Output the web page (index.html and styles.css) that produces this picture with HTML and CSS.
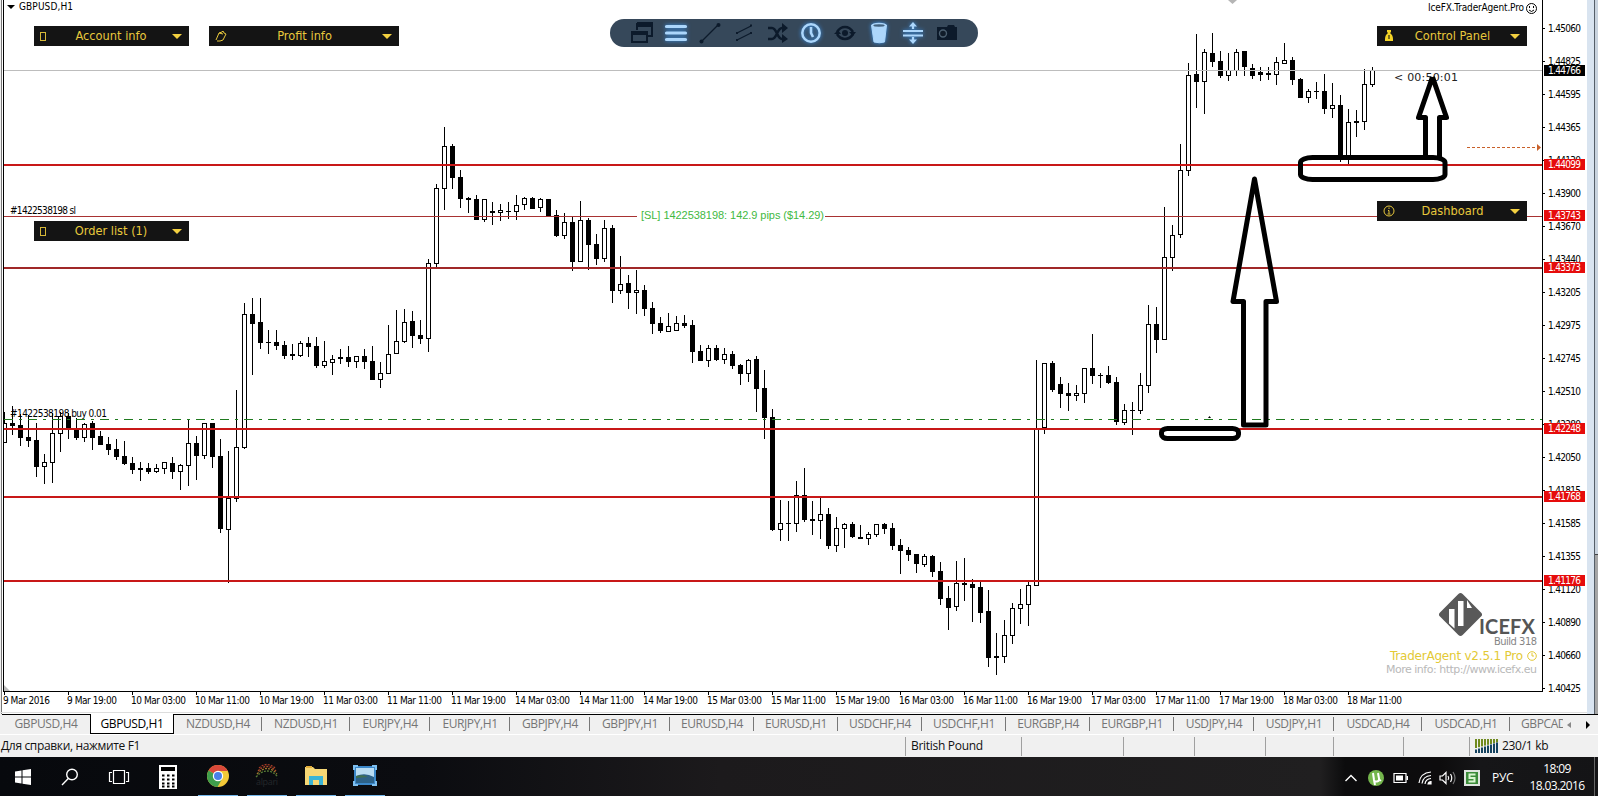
FILE: index.html
```html
<!DOCTYPE html>
<html lang="ru">
<head>
    <meta charset="UTF-8">
    <title>GBPUSD,H1</title>
    <link rel="stylesheet" href="styles.css">
</head>
<body>
    <div class="chart-window">
        <svg class="chart" id="chart" width="1587" height="712">
            <g id="candles" shape-rendering="crispEdges"></g>
            <g id="levels" shape-rendering="crispEdges"></g>
            <g id="axes" shape-rendering="crispEdges"></g>
            <g id="labels"></g>

            <!-- chart title -->
            <path d="M7 5h8l-4 4z"/>
            <text x="19" y="10" textLength="54">GBPUSD,H1</text>
            <path d="M1228 0h9l-4.500 4z" fill="#b5b5b5"/>
            <text x="1428" y="11" textLength="96">IceFX.TraderAgent.Pro</text>
            <g fill="none" stroke="#000">
                <circle cx="1531.500" cy="8.500" r="5"/>
                <path d="M1529 10q2.500 3 5 0"/>
                <path d="M1529.500 6v2M1533.500 6v2"/>
            </g>
            <path d="M4 685l6 6h-6z" fill="#bbb"/>

            <text x="10" y="214" textLength="66">#1422538198 sl</text>
            <text x="10" y="417" textLength="97">#1422538198 buy 0.01</text>
            <rect x="637" y="214" width="188" height="5" fill="#fff"/>
            <text class="sl-text" x="641" y="219" textLength="183">[SL] 1422538198: 142.9 pips ($14.29)</text>
            <text class="timer" x="1394" y="81" textLength="64">&lt; 00:50:01</text>
            <path d="M1467 147.500h70" stroke="#c8602a" stroke-dasharray="3 2"/>
            <path d="M1537 144l4 3.500-4 3.500z" fill="#c8602a"/>
            <path d="M1208 418h3l-1.500-2z"/>

            <!-- hand drawn marks -->
            <g class="marks">
                <path d="M1254.500 179L1233 301.500h10.500v123.500h22.500v-123.500h10.500z"/>
                <path d="M1432.500 77L1418.500 117.500h7v40.500M1432.500 77L1446.500 117.500h-7v40.500"/>
                <rect x="1300.500" y="157.500" width="144.500" height="22" rx="12" ry="5"/>
                <rect x="1161.500" y="428.500" width="77" height="10" rx="6" ry="4"/>
            </g>

            <!-- watermark -->
            <g>
                <rect x="1444.500" y="598.500" width="32" height="32" rx="3" fill="#595959" transform="rotate(45 1460.500 614.500)"/>
                <path d="M1449 609h5.500v19.500l-5.500-5zM1458 601h5.500v25h-5.500zM1467 600l5 8h-5z" fill="#fff"/>
                <text class="logo-text" x="1479" y="634" textLength="56">ICEFX</text>
                <text class="build" x="1494" y="645" textLength="43">Build 318</text>
                <text class="agent" x="1390" y="660" textLength="133">TraderAgent v2.5.1 Pro</text>
                <circle cx="1532" cy="656" r="4.300" fill="none" stroke="#e3c935"/>
                <path d="M1532 653v3h2" fill="none" stroke="#e3c935"/>
                <text class="more" x="1386" y="673" textLength="151">More info: http://www.icefx.eu</text>
            </g>
        </svg>

        <div class="panel account"><span class="box"></span><b>Account info</b><i></i></div>
        <div class="panel profit">
            <svg width="12" height="12"><path d="M1 10L4 3l3-1 1-1 1 2 2 1-3 6-3 1H2M4 3l4 1" fill="none" stroke="#e8c83c"/></svg>
            <b>Profit info</b><i></i>
        </div>
        <div class="panel orders"><span class="box"></span><b>Order list (1)</b><i></i></div>
        <div class="panel control">
            <svg width="12" height="12"><path d="M4 0h4v2l-1 1q3 2 3 6v2H2V9q0-4 3-6L4 2z" fill="#f3d327"/><path d="M6 5v4M5 6h2M5 8h2" stroke="#554b12"/></svg>
            <b>Control Panel</b><i></i>
        </div>
        <div class="panel dashboard">
            <svg width="12" height="12"><circle cx="6" cy="6" r="5" fill="none" stroke="#e8c83c"/><path d="M6 2.500v1.500M5 5.500h1v3M4.500 9h3" fill="none" stroke="#e8c83c"/></svg>
            <b>Dashboard</b><i></i>
        </div>

        <div class="toolbar">
            <svg width="24" height="24"><path d="M7 2h15v13h-5M7 2v7" fill="none" stroke="#0c1a2b" stroke-width="2"/><path d="M6 2h17v4H6zM1 10h17v4H1z" fill="#0c1a2b"/><path d="M2 11h15v10H2z" fill="none" stroke="#0c1a2b" stroke-width="2"/></svg>
            <svg class="on" width="24" height="24"><path d="M2.500 5.500h19M2.500 12h19M2.500 18.500h19" stroke-width="3.200" stroke-linecap="round"/></svg>
            <svg width="24" height="24"><path d="M4 20L20 4" stroke="#0c1a2b" stroke-width="1.300"/><circle cx="3.500" cy="20.500" r="2" fill="#0c1a2b"/><circle cx="20.500" cy="4" r="2" fill="#0c1a2b"/></svg>
            <svg width="24" height="24"><path d="M5 12L19 5M5 19l14-7" stroke="#0c1a2b" stroke-width="1.100"/><path d="M4 12h2M18 4.500h2M4 19h2M18 12h2" stroke="#0c1a2b" stroke-width="2"/></svg>
            <svg width="24" height="24"><path d="M2 7h4c5 0 5 11 10 11h2M2 18h4c5 0 5-11 10-11h2" fill="none" stroke="#0c1a2b" stroke-width="2.500"/><path d="M16 2l6 5-6 5zM16 13l6 5-6 4z" fill="#0c1a2b"/></svg>
            <svg class="on" width="24" height="24"><circle cx="12" cy="12" r="8.700" fill="none" stroke-width="2.500"/><path d="M12 6v6l2 4" fill="none" stroke-width="2.600"/></svg>
            <svg width="24" height="24"><path d="M4 11q3-5 8-5t8 5M4 13q3 5 8 5t8-5" fill="none" stroke="#0c1a2b" stroke-width="2.500"/><circle cx="12" cy="12" r="3" fill="#0c1a2b"/><path d="M16 11h7l-3 4zM1 13h7l-3-4z" fill="#0c1a2b"/></svg>
            <svg class="on" width="24" height="24"><path d="M4.500 4h15l-2 17q-5 1.500-10.500 0z" fill="#acd6fb"/><ellipse cx="12" cy="4.500" rx="6.500" ry="2" fill="#42627f" stroke-width="1.600"/></svg>
            <svg class="on" width="24" height="24"><path d="M2 10h20M2 14.500h20M12 3v5M12 16v5" stroke-width="2.200"/><path d="M12 1l4 4.500H8zM12 23l4-4.500H8z" fill="#acd6fb" stroke="none"/></svg>
            <svg width="24" height="24"><path d="M2 6h10l1-2h6l1 2h2v13H2z" fill="#0c1a2b"/><circle cx="8" cy="12.500" r="3.500" fill="#101c2a" stroke="#4b5f70" stroke-width="1.400"/></svg>
        </div>
    </div>

    <div class="tabs" id="tabs"></div>

    <div class="statusbar">
        <span class="help">Для справки, нажмите F1</span>
        <span class="pound">British Pound</span>
        <span class="c1"></span>
        <span class="c2"></span>
        <span class="c2"></span>
        <span class="c3"></span>
        <span class="c4"></span>
        <span class="c5"></span>
        <span class="traffic">
            <svg width="24" height="14" id="signal"></svg>
            230/1 kb
        </span>
    </div>

    <div class="taskbar">
        <div class="start">
            <svg width="18" height="18" fill="#fff"><path d="M1 3.500l6.500-1v6H1zM8.500 2.300L17 1v7.500H8.500zM1 9.500h6.500v6l-6.500-1zM8.500 9.500H17V17l-8.500-1.300z"/></svg>
            <svg width="18" height="18" fill="none" stroke="#fff" stroke-width="1.400"><circle cx="11" cy="6.500" r="5.300"/><path d="M7.300 10.500L1 17"/></svg>
            <svg width="22" height="18" fill="none" stroke="#fff" stroke-width="1.200"><path d="M5.500 2.500h11v13h-11zM4 4.500H1.500v9H4M18 4.500h2.500v9H18"/></svg>
            <svg width="18" height="24"><path d="M0 0h18v24H0z" fill="#fff"/><path d="M2 2h14v4H2z"/><path d="M3 10.500h13M3 14.500h13M3 18.500h13M3 21.500h13" stroke="#000" stroke-width="2" stroke-dasharray="2.500 2.500"/></svg>
        </div>
        <div class="apps">
            <div class="app">
                <svg width="24" height="24"><circle cx="12" cy="12" r="11" fill="#f3c938"/><path d="M12 12L2.500 6.500A11 11 0 0 1 21.800 7H12z" fill="#d9493a"/><path d="M2.500 6.500A11 11 0 0 0 11.500 23l4.500-8-4-3z" fill="#3f9e4c"/><circle cx="12" cy="12" r="5.200" fill="#fff"/><circle cx="12" cy="12" r="4" fill="#4a80e8"/></svg>
            </div>
            <div class="app">
                <svg width="26" height="26"><g fill="none" stroke-width="1.300" stroke-dasharray="2 1.200"><path d="M5 5q8-7 16 0" stroke="#a83c28"/><path d="M4 8q9-9 18 0" stroke="#b04a28"/><path d="M3 11q10-11 20 0" stroke="#a07a30"/><path d="M2 14q11-12 22 0" stroke="#557a35"/></g><text x="2" y="22" font-size="9" fill="#24272a" textLength="22">alpari</text></svg>
            </div>
            <div class="app">
                <svg width="24" height="24"><path d="M1 3h8l2 2h12v16H1z" fill="#f6d775"/><path d="M2 2h6v2H2z" fill="#e2ad3c"/><path d="M5 12h14v9h-4v-5h-6v5H5z" fill="#3ab4d6"/></svg>
            </div>
            <div class="app">
                <svg width="24" height="24"><path d="M1 2h22v19H1z" fill="#3b87c8"/><path d="M3 4h18v15H3z" fill="#b9dcf2"/><path d="M3 12q9-4 18 1v6H3z" fill="#2d6288"/><path d="M3 12q7-2 12 1l-12 1z" fill="#3f6f50"/><path d="M1 6V2h4M19 2h4v4M23 17v4h-4M5 21H1v-4" fill="none" stroke="#7fc0ef" stroke-width="2"/></svg>
            </div>
        </div>
        <div class="tray">
            <svg width="14" height="10" fill="none" stroke="#fff" stroke-width="1.400"><path d="M1.500 8L7 2.500 12.500 8"/></svg>
            <svg class="torrent" width="16" height="18"><circle cx="8" cy="9" r="8" fill="#74b64c"/><path d="M5 4l1 7q.500 2 3 1.500t2-3L10 4M11 10q.500 2 2 1M6 11l1 5" fill="none" stroke="#fff" stroke-width="2"/></svg>
            <svg class="battery" width="16" height="12"><path d="M1 1.500h12v9H1z" fill="none" stroke="#fff" stroke-width="1.200"/><path d="M3 3.500h7v5H3zM13.500 4H15v4h-1.500z" fill="#fff"/></svg>
            <svg class="wifi" width="14" height="14" fill="none" stroke="#fff" stroke-width="1.200"><path d="M1 12Q2 2 13 1M4 12.500Q5 5 13 4.500M7 13q.500-5 6-5.500"/><path d="M10 13q.500-2.500 3-2.500V13z" fill="#fff"/></svg>
            <svg class="volume" width="18" height="14" fill="none" stroke="#fff" stroke-width="1.200"><path d="M1 5h2.500L7 1.500v11L3.500 9H1zM9 5q1.500 2 0 4M11.500 3q2.500 4 0 8"/><path d="M14 1q4 6 0 12" stroke="#777"/></svg>
            <svg class="green" width="16" height="16"><path d="M0 0h16v16H0z" fill="#dfe5df"/><path d="M2 2h12v12H2z" fill="#3c8c3a"/><path d="M11.500 4.500h-6V8h5v3.500h-6" fill="none" stroke="#d8f5d0" stroke-width="2"/></svg>
            <span class="lang">РУС</span>
            <div class="clock"><div>18:09</div><div>18.03.2016</div></div>
        </div>
    </div>

    <script src="chart.js"></script>
</body>
</html>
```
FILE: styles.css
```css
body {
    margin: 0;
    width: 1598px;
    height: 796px;
    overflow: hidden;
    background: #f0f0f0;
    font-family: "Open Sans", "Noto Sans", sans-serif;
    font-size: 12px;
    color: #111;
}
.chart-window {
    position: relative;
    height: 714px;
    box-sizing: border-box;
    background: linear-gradient(90deg, #f0f0f0 1px, #777 1px, #777 2px, #fff 2px, #fff 1587px, #d9e4f0 1587px, #d9e4f0 1594px, #555e68 1594px, #555e68 1595px, #c9d3de 1595px);
}
.chart-window::after {
    content: "";
    position: absolute;
    right: 0;
    top: 554px;
    width: 3px;
    height: 160px;
    background: #a5a5a5;
    border-top: 1px solid #444;
    box-sizing: border-box;
}
.chart {
    display: block;
    border-bottom: 1px solid #ddd;
}
.chart text {
    font-family: "DejaVu Sans Condensed", "DejaVu Sans", sans-serif;
    font-size: 10px;
}
.chart .sl-text {
    font-family: "Liberation Sans", Arial, sans-serif;
    font-size: 11px;
    fill: #42b942;
}
.chart .timer {
    font-family: "DejaVu Sans", sans-serif;
    font-size: 11px;
    fill: #222;
}
.chart .tag {
    fill: #fff;
}
.chart .logo-text {
    font-family: Lato, sans-serif;
    font-size: 20px;
    font-weight: bold;
    fill: #555;
}
.chart .build {
    font-size: 11px;
    fill: #858585;
}
.chart .agent {
    font-family: "DejaVu Sans", sans-serif;
    font-size: 12px;
    fill: #e3c935;
}
.chart .more {
    font-family: "DejaVu Sans", sans-serif;
    font-size: 11px;
    fill: #b9b9b9;
}
.marks {
    fill: none;
    stroke: #000;
    stroke-width: 5;
    stroke-linejoin: round;
}

/* dark info panels */
.panel {
    position: absolute;
    display: flex;
    align-items: center;
    box-sizing: border-box;
    height: 20px;
    padding: 0 7px 0 6px;
    background: #141414;
    color: #e8c83c;
    font-family: "DejaVu Sans Condensed", "DejaVu Sans", sans-serif;
    font-size: 12.700px;
}
.panel b {
    flex: 1;
    font-weight: normal;
    line-height: 18px;
    text-align: center;
}
.panel i {
    border: 5px solid transparent;
    border-top-color: #f3d040;
    border-bottom: 0;
}
.panel .box {
    width: 4px;
    height: 7px;
    margin-right: 4px;
    border: 1px solid #d6b838;
}
.account { left: 34px; top: 26px; width: 155px; }
.profit { left: 209px; top: 26px; width: 190px; }
.orders { left: 34px; top: 221px; width: 155px; }
.control { left: 1377px; top: 26px; width: 150px; }
.dashboard { left: 1377px; top: 201px; width: 150px; }

.toolbar {
    position: absolute;
    left: 610px;
    top: 19px;
    width: 368px;
    height: 28px;
    box-sizing: border-box;
    padding: 0 19px 0 20px;
    display: flex;
    align-items: center;
    justify-content: space-between;
    background: #36485a;
    border-radius: 14px;
}
.toolbar .on {
    stroke: #acd6fb;
    filter: drop-shadow(0 0 2px #3b92e8);
}

/* chart tabs */
.tabs {
    display: flex;
    height: 21px;
    box-sizing: border-box;
    padding-left: 2px;
    border-bottom: 1px solid #fff;
    color: #757575;
    overflow: hidden;
}
.tab {
    flex: none;
    box-sizing: border-box;
    height: 20px;
    border-top: 1px solid #000;
    line-height: 18px;
    text-align: center;
    letter-spacing: -0.4px;
    position: relative;
}
.tab.sep::after {
    content: "";
    position: absolute;
    right: 0;
    top: 2px;
    width: 1px;
    height: 14px;
    background: #777;
}
.tab.active {
    background: #fff;
    color: #000;
    border: 1px solid #000;
    border-top: 0;
    line-height: 19px;
}
.tab.last {
    text-align: left;
    padding-left: 11px;
    overflow: hidden;
}
.scroll {
    flex: 1;
    display: flex;
    justify-content: space-between;
    align-items: center;
    padding: 0 7px 0 3px;
    border-top: 1px solid #000;
}

.statusbar {
    display: flex;
    align-items: center;
    height: 22px;
}
.statusbar span {
    flex: none;
    box-sizing: border-box;
    height: 19px;
    line-height: 18px;
    letter-spacing: -0.3px;
    border-left: 1px solid #a0a0a0;
}
.statusbar .help {
    width: 905px;
    border: 0;
    padding-left: 1px;
    letter-spacing: -0.350px;
}
.statusbar .pound {
    width: 116px;
    padding-left: 5px;
}
.statusbar .c1 { width: 102px; }
.statusbar .c2 { width: 71px; }
.statusbar .c3 { width: 68px; }
.statusbar .c4 { width: 70px; }
.statusbar .c5 { width: 66px; }
.statusbar .traffic {
    display: flex;
    align-items: center;
    gap: 3px;
    width: 129px;
    padding-left: 5px;
}

.taskbar {
    display: flex;
    align-items: center;
    height: 39px;
    background: linear-gradient(90deg, #07090d 0, #0b0c10 420px, #1c1a1c 720px, #201f20 1320px, #0c0c0d 1345px, #0d0c0d 1440px, #161618 1480px, #141416 100%);
    color: #fff;
}
.start {
    display: flex;
    align-items: center;
    gap: 29px;
    width: 184px;
    padding-left: 14px;
    box-sizing: border-box;
}
.apps {
    display: flex;
    gap: 9px;
    margin-left: 14px;
}
.app {
    display: flex;
    align-items: center;
    justify-content: center;
    width: 40px;
    height: 39px;
    box-sizing: border-box;
    border-bottom: 1px solid #76b9ed;
}
.tray {
    display: flex;
    align-items: center;
    margin-left: auto;
    margin-right: 3px;
    height: 39px;
    padding: 2px 2px 0 0;
    border-right: 1px solid #666;
    box-sizing: border-box;
}
.torrent { margin-left: 10px; }
.battery { margin-left: 9px; }
.wifi { margin-left: 9px; }
.volume { margin-left: 7px; }
.green { margin-left: 7px; }
.lang {
    margin-left: 12px;
    width: 22px;
    letter-spacing: -0.3px;
}
.clock {
    width: 70px;
    margin-left: 8px;
    text-align: center;
    line-height: 17px;
    letter-spacing: -0.600px;
    margin-top: -2px;
}
```
FILE: chart.js
```js
const NS = 'http://www.w3.org/2000/svg';

function add(parent, tag, attrs, text) {
    const el = document.createElementNS(NS, tag);
    for (const key in attrs) el.setAttribute(key, attrs[key]);
    if (text) el.textContent = text;
    parent.appendChild(el);
    return el;
}

// high, body top, body bottom, low, 1 = bearish
const bars = [
    [412,423,443,443,0],[406,423,426,435,1],[414,425,438,446,1],[415,437,441,447,1],[423,440,467,477,1],
    [454,462,467,484,0],[413,433,463,483,0],[412,416,434,452,0],[413,416,429,439,1],[418,429,438,440,1],
    [423,424,438,442,0],[421,423,438,450,1],[431,436,445,445,1],[437,444,450,455,1],[439,449,457,460,1],
    [441,456,464,465,1],[457,463,470,474,1],[462,468,470,481,1],[463,468,472,474,1],[464,468,472,473,0],
    [462,462,469,474,0],[457,463,472,479,1],[464,465,472,490,0],[419,443,466,486,0],[436,443,456,480,1],
    [423,423,456,459,0],[423,423,457,468,1],[439,456,529,533,1],[451,498,530,583,0],[390,447,499,502,0],
    [303,314,448,449,0],[298,314,324,375,1],[298,322,343,349,1],[330,342,343,354,1],[330,342,346,350,1],
    [341,345,356,359,1],[344,354,356,360,1],[341,343,356,357,0],[337,343,347,357,1],[337,346,366,368,1],
    [341,361,366,368,0],[355,359,363,375,0],[349,357,359,364,1],[346,357,362,367,1],[356,356,362,368,0],
    [349,356,362,369,1],[346,361,380,380,1],[362,373,380,388,0],[325,354,374,374,0],[310,341,354,354,0],
    [309,322,342,343,0],[311,321,336,348,1],[320,335,339,344,1],[259,263,339,352,0],[184,188,264,267,0],
    [127,146,189,210,0],[144,146,178,189,1],[170,177,199,208,1],[197,198,200,213,1],[195,199,220,220,1],
    [199,199,220,222,0],[202,211,213,225,1],[204,210,213,221,0],[202,211,212,219,1],[195,205,212,220,0],
    [197,198,205,210,0],[197,198,209,209,1],[198,199,208,212,0],[199,199,216,217,1],[210,215,236,237,1],
    [213,222,236,239,0],[217,222,262,271,1],[201,220,262,262,0],[218,220,245,270,1],[234,244,259,265,1],
    [220,228,259,262,0],[225,228,291,303,1],[256,284,291,294,0],[275,283,293,309,1],[270,290,293,314,0],
    [285,290,309,316,1],[302,308,324,334,1],[317,323,331,333,1],[313,326,332,332,0],[316,323,331,331,0],
    [315,323,326,328,1],[320,325,352,363,1],[345,351,361,361,1],[345,348,361,367,0],[345,348,360,361,1],
    [348,354,360,364,0],[351,354,366,369,1],[364,365,374,385,1],[359,360,374,382,0],[356,359,389,412,1],
    [370,388,418,439,1],[409,417,530,531,1],[500,523,530,541,0],[501,523,524,541,1],[481,495,524,532,0],
    [468,495,520,522,1],[501,519,521,535,1],[498,514,521,539,0],[508,514,546,549,1],[517,528,546,552,0],
    [523,524,529,548,0],[522,524,537,538,1],[525,537,539,539,1],[532,534,539,545,0],[524,524,535,537,0],
    [523,524,529,534,1],[523,528,546,550,1],[539,545,551,574,1],[547,550,555,561,1],[554,554,564,573,1],
    [554,556,565,567,0],[555,556,572,577,1],[562,571,599,605,1],[586,598,608,630,1],[561,583,607,611,0],
    [558,583,585,601,1],[579,584,588,622,1],[582,587,613,623,1],[590,611,658,667,1],[633,656,658,675,1],
    [620,635,657,663,0],[603,608,636,644,0],[589,604,609,624,0],[582,585,605,626,0],[360,429,586,586,0],
    [363,363,428,434,0],[361,363,390,392,1],[377,384,394,408,1],[383,393,396,411,1],[385,393,396,401,0],
    [368,368,394,403,0],[334,368,376,384,1],[373,375,376,388,1],[366,375,383,384,1],[377,382,422,425,1],
    [404,410,423,425,0],[402,410,411,435,1],[373,385,411,414,0],[305,324,386,393,0],[307,324,340,353,1],
    [207,257,340,340,0],[225,235,258,271,0],[144,170,235,238,0],[63,75,171,176,0],[34,74,82,108,1],
    [49,52,82,114,0],[33,53,62,67,1],[51,61,76,78,1],[53,70,76,81,0],[49,52,71,76,0],
    [51,51,67,76,1],[64,68,76,79,1],[67,72,75,81,1],[67,73,75,80,1],[57,62,75,85,0],
    [43,60,64,64,0],[57,60,80,85,1],[78,79,98,98,1],[89,91,98,103,0],[82,91,92,99,1],
    [74,91,109,114,1],[83,105,109,118,0],[95,105,157,162,1],[109,122,160,164,0],[110,121,123,137,1],
    [69,84,122,130,0],[67,70,85,87,0]
];

const candles = document.getElementById('candles');
bars.forEach(([high, top, bottom, low, bear], i) => {
    const x = 4 + i * 8;
    add(candles, 'rect', { x: x, y: high, width: 1, height: low - high });
    add(candles, 'rect', { x: x - 2, y: top, width: 5, height: bottom - top });
    if (!bear && bottom - top > 2) {
        add(candles, 'rect', { x: x - 1, y: top + 1, width: 3, height: bottom - top - 2, fill: '#fff' });
    }
});
add(candles, 'rect', { x: 2, y: 400, width: 2, height: 50, fill: '#fff' });

// horizontal levels
const levels = document.getElementById('levels');
add(levels, 'rect', { x: 4, y: 70, width: 1538, height: 1, fill: '#bdbdbd' });
add(levels, 'path', { d: 'M4 419.5H1542', stroke: '#1f7a1f', 'stroke-dasharray': '9 6 3 6' });
add(levels, 'rect', { x: 4, y: 216, width: 1538, height: 1, fill: '#a83232' });
[[164, '#c81818'], [267, '#a02828'], [428, '#c81818'], [496, '#c81818'], [580, '#c81818']].forEach(([y, fill]) => {
    add(levels, 'rect', { x: 4, y: y, width: 1538, height: 2, fill: fill });
});

// frame and scales
const axes = document.getElementById('axes');
const labels = document.getElementById('labels');
add(axes, 'rect', { x: 3, y: 0, width: 1, height: 692 });
add(axes, 'rect', { x: 3, y: 691, width: 1540, height: 1 });
add(axes, 'rect', { x: 1542, y: 0, width: 1, height: 692 });

const prices = ['1.45060', '1.44825', '1.44595', '1.44365', '1.44130', '1.43900', '1.43670', '1.43440',
    '1.43205', '1.42975', '1.42745', '1.42510', '1.42280', '1.42050', '1.41815', '1.41585', '1.41355',
    '1.41120', '1.40890', '1.40660', '1.40425'];
prices.forEach((price, i) => {
    const y = 28 + i * 33;
    add(axes, 'rect', { x: 1543, y: y, width: 2, height: 1 });
    add(labels, 'text', { x: 1548, y: y + 4, textLength: 33 }, price);
});

const tags = [['1.44766', 65], ['1.44099', 159], ['1.43743', 210], ['1.43373', 262], ['1.42248', 423],
    ['1.41768', 491], ['1.41176', 575]];
tags.forEach(([price, y], i) => {
    add(labels, 'rect', { x: 1544, y: y, width: 41, height: 11, fill: i ? '#e60c0c' : '#000' });
    add(labels, 'text', { class: 'tag', x: 1548, y: y + 9, textLength: 33 }, price);
});

const times = ['9 Mar 2016', '9 Mar 19:00', '10 Mar 03:00', '10 Mar 11:00', '10 Mar 19:00', '11 Mar 03:00',
    '11 Mar 11:00', '11 Mar 19:00', '14 Mar 03:00', '14 Mar 11:00', '14 Mar 19:00', '15 Mar 03:00',
    '15 Mar 11:00', '15 Mar 19:00', '16 Mar 03:00', '16 Mar 11:00', '16 Mar 19:00', '17 Mar 03:00',
    '17 Mar 11:00', '17 Mar 19:00', '18 Mar 03:00', '18 Mar 11:00'];
times.forEach((time, i) => {
    const x = 4 + i * 64;
    add(axes, 'rect', { x: x, y: 692, width: 1, height: 3 });
    add(labels, 'text', { x: x - 1, y: 704, textLength: [47, 50][i] || 55 }, time);
});

// tabs: name, width
const tabList = [['GBPUSD,H4', 88], ['GBPUSD,H1', 84], ['NZDUSD,H4', 88], ['NZDUSD,H1', 88], ['EURJPY,H4', 80],
    ['EURJPY,H1', 80], ['GBPJPY,H4', 80], ['GBPJPY,H1', 80], ['EURUSD,H4', 84], ['EURUSD,H1', 84],
    ['USDCHF,H4', 84], ['USDCHF,H1', 84], ['EURGBP,H4', 84], ['EURGBP,H1', 84], ['USDJPY,H4', 80],
    ['USDJPY,H1', 80], ['USDCAD,H4', 88], ['USDCAD,H1', 88], ['GBPCAD', 53]];
const tabs = document.getElementById('tabs');
tabList.forEach(([name, width], i) => {
    const tab = document.createElement('div');
    tab.className = 'tab' + (i === 1 ? ' active' : '') + (i > 1 && i < 18 ? ' sep' : '') + (i === 18 ? ' last' : '');
    tab.style.width = width + 'px';
    tab.textContent = name;
    tabs.appendChild(tab);
});
const scroll = document.createElement('div');
scroll.className = 'scroll';
scroll.innerHTML = '<svg width="6" height="8"><path d="M5 1v6L1 4z" fill="#888"/></svg>' +
    '<svg width="6" height="8"><path d="M1 0v8l4-4z"/></svg>';
tabs.appendChild(scroll);

// connection bars
const signal = document.getElementById('signal');
for (let i = 0; i < 8; i++) {
    add(signal, 'rect', { x: i * 3, y: 0, width: 2, height: 9 - i * 0.8, fill: '#6f8a1e' });
    add(signal, 'rect', { x: i * 3, y: 10.5 - i, width: 2, height: 3.5 + i, fill: '#154360' });
}
```
